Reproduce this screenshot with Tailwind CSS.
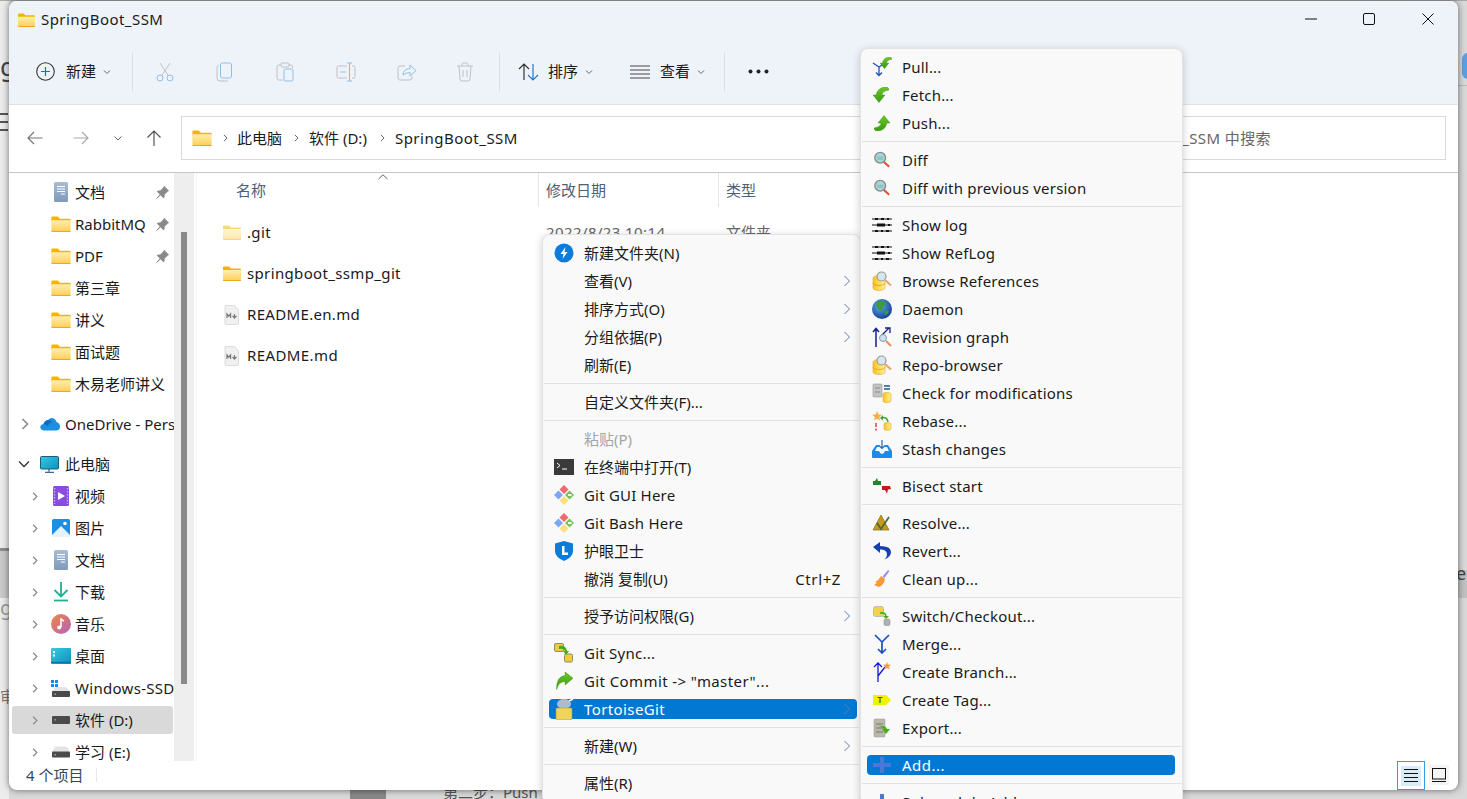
<!DOCTYPE html>
<html lang="zh-CN">
<head>
<meta charset="utf-8">
<title>SpringBoot_SSM</title>
<script src="https://cdn.jsdelivr.net/npm/@tailwindcss/browser@4"></script>
</head>
<body class="font-['Noto_Sans','Noto_Sans_CJK_SC',sans-serif] text-[15px] text-[#1a1a1a]">
<svg class="absolute w-0 h-0" aria-hidden="true">
  <defs>
    <linearGradient id="gf" x1="0" y1="0" x2="0" y2="1"><stop offset="0" stop-color="#ffeeb0"/><stop offset="1" stop-color="#fccf55"/></linearGradient>
    <linearGradient id="gdoc" x1="0" y1="0" x2="0" y2="1"><stop offset="0" stop-color="#a9bcd6"/><stop offset="1" stop-color="#7f9ab8"/></linearGradient>
    <linearGradient id="gmon" x1="0" y1="0" x2="1" y2="1"><stop offset="0" stop-color="#35cbe0"/><stop offset="1" stop-color="#0f8fc0"/></linearGradient>
    <linearGradient id="gmus" x1="0" y1="0" x2="1" y2="1"><stop offset="0" stop-color="#f08a3c"/><stop offset="1" stop-color="#b060c0"/></linearGradient>
    <linearGradient id="gcoin" x1="0" y1="0" x2="1" y2="0"><stop offset="0" stop-color="#f7c420"/><stop offset="1" stop-color="#fff09a"/></linearGradient>
    <linearGradient id="ggreen" x1="0" y1="0" x2="0" y2="1"><stop offset="0" stop-color="#6cc82c"/><stop offset="1" stop-color="#3a9a10"/></linearGradient>
    <radialGradient id="gglobe" cx=".4" cy=".35" r=".7"><stop offset="0" stop-color="#5ab0f0"/><stop offset="1" stop-color="#123a90"/></radialGradient>
    <symbol id="folder" viewBox="0 0 18 15"><path d="M0 1.500A1 1 0 0 1 1 .5h5l2 2h9a1 1 0 0 1 1 1V6H0z" fill="#f5b400"/><path d="M0 4h18v10a.8.8 0 0 1-.8.8H.8A.8.8 0 0 1 0 14z" fill="url(#gf)"/><path d="M0 14h18v.2a.7.7 0 0 1-.7.7H.7a.7.7 0 0 1-.7-.7z" fill="#e9a91c"/></symbol>
    <symbol id="doc" viewBox="0 0 16 20"><rect x="1" y="0" width="14" height="20" rx="1.500" fill="url(#gdoc)"/><path d="M4 4.500h8M4 7h8M4 9.500h8M8 12h4" stroke="#fff" stroke-width="1.100"/></symbol>
    <symbol id="pin" viewBox="0 0 14 14"><path d="M8.500.8l4.700 4.700-1.300.6-3 3 .1 2.200-1.100 1-2.700-2.700L1.500 13l-.5-.5 3.400-3.700L1.700 6.100l1-1 2.200.1 3-3z" fill="#8a8a8a"/></symbol>
    <symbol id="chev" viewBox="0 0 8 12"><path d="M1.500 1L6.500 6l-5 5" fill="none" stroke="#8a8a8a" stroke-width="1.600"/></symbol>
    <symbol id="subm" viewBox="0 0 8 12"><path d="M1.500 1l5 5-5 5" fill="none" stroke="#5b7fb0" stroke-width="1"/></symbol>
    <symbol id="drive" viewBox="0 0 18 12"><path d="M2.500 1.500Q3 .5 4 .5h10q1 0 1.500 1L18 6H0z" fill="#e4e4e4"/><rect x="0" y="5.500" width="18" height="6" rx="1" fill="#4a4a4a"/><rect x="2.500" y="8" width="1.500" height="1.500" fill="#4fd46c"/></symbol>
    <symbol id="gitd" viewBox="0 0 20 20"><path d="M10 0l4.500 4.500-4.500 4.500-4.500-4.500z" fill="#ef6a6f"/><path d="M15.500 5.500L20 10l-4.500 4.500L11 10z" fill="#78c257"/><path d="M10 11l4.500 4.500L10 20l-4.500-4.500z" fill="#fbdf7c"/><path d="M4.500 5.500L9 10l-4.500 4.500L0 10z" fill="#7aa8f4"/><path d="M14 9h3.500v2H14z" fill="#fff"/></symbol>
    <symbol id="lens" viewBox="0 0 20 20"><path d="M11 11l7 6.500" stroke="#ef4a2a" stroke-width="2.300"/><circle cx="8" cy="7.500" r="6" fill="#a8d6d8" stroke="#8a8a8a" stroke-width="1.500"/><path d="M4.500 7h7M4.500 9h7" stroke="#7fb0b2"/></symbol>
    <symbol id="slog" viewBox="0 0 20 16"><path d="M0 2h20M0 8h20M0 14h20" stroke="#111" stroke-width="1.100"/><path d="M3 1h3v2H3zM9 1h3v2H9zM15 1h2v2h-2zM5 6.500h8v3H5zM16 7h2v2h-2zM3 13h3v2H3zM9 13h2v2H9zM14 13h3v2h-3z" fill="#111"/></symbol>
    <symbol id="coinlens" viewBox="0 0 20 20"><path d="M1 7a6 2.500 0 0 1 12 0v10a6 2.500 0 0 1-12 0z" fill="url(#gcoin)" stroke="#e0a820" stroke-width=".6"/><path d="M1 12a6 2.500 0 0 0 12 0" fill="none" stroke="#d99f1a" stroke-width=".8"/><circle cx="9.500" cy="5.500" r="4.500" fill="#d6e6ee" stroke="#9a9a9a" stroke-width="1.200"/><path d="M13 9l6 5.500" stroke="#e8a468" stroke-width="2"/></symbol>
    <symbol id="gfetch" viewBox="0 0 16 16"><path d="M0 8l6 7.500L12 8H9q0-4 7-5-.5-3-3-3Q5 0 3 8z" fill="url(#ggreen)" stroke="#2e8a0d" stroke-width=".4"/></symbol>
    <symbol id="gpush" viewBox="0 0 16 16"><path d="M16 8L10 .5 4 8h3q0 4-7 5 .5 3 3 3 8 0 10-8z" fill="url(#ggreen)" stroke="#2e8a0d" stroke-width=".4"/></symbol>
    <symbol id="gcommit" viewBox="0 0 16 16"><path d="M16 5.500L9 0v3Q1 4 1.500 15.500 3 8.500 9 8.500V11.500z" fill="url(#ggreen)" stroke="#2e8a0d" stroke-width=".4"/></symbol>
  </defs>
</svg>

<div class="relative w-[1467px] h-[799px] overflow-hidden bg-[#d9d9d9]">
  <!-- desktop behind the window -->
  <div class="absolute left-0 top-0 w-[9px] h-[799px] bg-[#ececec]"></div>
  <div class="absolute left-0 top-0 w-[1467px] h-px bg-[#aaa]"></div>
  <div class="absolute left-0 top-[548px] w-[9px] h-[3px] bg-[#8c8c8c]"></div>
  <div class="absolute left-0 top-[551px] w-[9px] h-[47px] bg-[#c9c9c9]"></div>
  <div class="absolute left-0 top-[52px] text-[26px] leading-[28px] text-[#444]">g</div>
  <div class="absolute left-0 top-[596px] text-[20px] leading-[24px] text-[#999]">g</div>
  <div class="absolute left-0 top-[113px] w-[8px] h-[2px] bg-[#555]"></div>
  <div class="absolute left-0 top-[121px] w-[8px] h-[2px] bg-[#555]"></div>
  <div class="absolute left-0 top-[129px] w-[8px] h-[2px] bg-[#555]"></div>
  <div class="absolute left-0 top-[686px] text-[15px] leading-[20px] text-[#777]">审</div>
  <div class="absolute left-[1458px] top-[85px] w-[9px] h-[1px] bg-[#bbb]"></div>
  <div class="absolute left-[1462px] top-[53px] w-[12px] h-[26px] rounded-full bg-[#5c9fe0]"></div>
  <div class="absolute left-[1458px] top-[570px] w-[9px] h-[28px] bg-[#c2c2c2]"></div>
  <div class="absolute left-[1456px] top-[561px] text-[18px] leading-[24px] text-[#444]">e</div>
  <div class="absolute left-[350px] top-[790px] w-[36px] h-[9px] bg-[#888]"></div>
  <div class="absolute left-[443px] top-[782px] text-[15px] leading-[20px] text-[#555]">第二步：Push</div>

  <!-- explorer window -->
  <div class="absolute left-[9px] top-[1px] w-[1449px] h-[789px] rounded-lg overflow-hidden bg-white flex flex-col shadow-[0_0_7px_rgba(0,0,0,0.55)]">
    <!-- title + toolbar -->
    <div class="h-[104px] bg-[#eef3fa] border-b border-[#dfe2e6] shrink-0 flex flex-col">
      <div class="h-[38px] flex items-center">
        <svg class="ml-[9px] mb-[1px] w-[17px] h-[14px]"><use href="#folder"/></svg>
        <span class="ml-[6px] mb-[1px] tracking-[0.45px] leading-none">SpringBoot_SSM</span>
        <svg class="ml-auto mr-[46px] mb-[2px] w-[12px] h-[12px]" viewBox="0 0 12 12"><path d="M0 6h12" stroke="#111" stroke-width="1"/></svg>
        <svg class="mr-[47px] mb-[2px] w-[12px] h-[12px]" viewBox="0 0 12 12"><rect x=".5" y=".5" width="11" height="11" rx="1.500" fill="none" stroke="#111"/></svg>
        <svg class="mr-[24px] mb-[2px] w-[12px] h-[12px]" viewBox="0 0 12 12"><path d="M.5.5l11 11M11.500.5l-11 11" stroke="#111" stroke-width="1"/></svg>
      </div>
      <div class="flex items-center h-[65px]">
        <svg class="ml-[27px] w-[19px] h-[19px]" viewBox="0 0 19 19"><circle cx="9.500" cy="9.500" r="8.800" fill="none" stroke="#333" stroke-width="1.100"/><path d="M9.500 5v9M5 9.500h9" stroke="#1b6fc2" stroke-width="1.200"/></svg>
        <span class="ml-[11px]">新建</span>
        <svg class="ml-[7px] w-[8px] h-[8px]" viewBox="0 0 8 8"><path d="M1 2.500l3 3 3-3" fill="none" stroke="#666"/></svg>
        <div class="ml-[21px] w-px h-[40px] bg-[#dde1e6]"></div>
        <div class="flex items-center opacity-45">
          <svg class="ml-[23px] w-[18px] h-[20px]" viewBox="0 0 18 20"><path d="M4 1l8.500 13M14 1L5.500 14" stroke="#888" stroke-width="1"/><circle cx="4" cy="16" r="3" fill="none" stroke="#1e82d2"/><circle cx="14" cy="16" r="3" fill="none" stroke="#1e82d2"/></svg>
          <svg class="ml-[42px] w-[18px] h-[20px]" viewBox="0 0 18 20"><path d="M3 3Q1 3.500 1 6v10q0 3 3 3h8" fill="none" stroke="#888"/><rect x="4.500" y="1" width="11" height="15" rx="2" fill="none" stroke="#1e82d2"/></svg>
          <svg class="ml-[42px] w-[18px] h-[20px]" viewBox="0 0 18 20"><path d="M5 3H2.500Q1 3 1 5v11q0 2 2 2h4M13 3h2q1.500 0 1.500 2v1" fill="none" stroke="#888"/><rect x="5" y="1" width="8" height="4" rx="1" fill="none" stroke="#888"/><rect x="8" y="7" width="9" height="12" rx="1.500" fill="none" stroke="#1e82d2"/></svg>
          <svg class="ml-[42px] w-[20px] h-[20px]" viewBox="0 0 20 20"><path d="M11 4H2.500Q1 4 1 5.500v9Q1 16 2.500 16H11M16 4h2q1 0 1 1.500v9q0 1.500-1 1.500h-2" fill="none" stroke="#888"/><path d="M4 10h6M13.500 1v18M11 1h5M11 19h5" stroke="#1e82d2"/></svg>
          <svg class="ml-[41px] w-[20px] h-[20px]" viewBox="0 0 20 20"><path d="M8 4H3Q1 4 1 6v10q0 2 2 2h10q2 0 2-2v-2" fill="none" stroke="#888"/><path d="M6 13q0-6 7-6.500V3l6 5.500-6 5.500v-3.500q-4 0-7 2.500z" fill="none" stroke="#1e82d2"/></svg>
          <svg class="ml-[39px] w-[18px] h-[20px]" viewBox="0 0 18 20"><path d="M1 4h16M6 4V2.500Q6 1 7.500 1h3Q12 1 12 2.500V4M3 4l1 13q0 2 2 2h6q2 0 2-2l1-13M7 8v7M11 8v7" fill="none" stroke="#888"/></svg>
        </div>
        <div class="ml-[25px] w-px h-[40px] bg-[#dde1e6]"></div>
        <svg class="ml-[18px] w-[21px] h-[18px]" viewBox="0 0 21 18"><path d="M6 17V1M1 6l5-5 5 5" fill="none" stroke="#333" stroke-width="1.200"/><path d="M15 1v16M10 12l5 5 5-5" fill="none" stroke="#1b78cf" stroke-width="1.200"/></svg>
        <span class="ml-[9px]">排序</span>
        <svg class="ml-[7px] w-[8px] h-[8px]" viewBox="0 0 8 8"><path d="M1 2.500l3 3 3-3" fill="none" stroke="#666"/></svg>
        <svg class="ml-[37px] w-[20px] h-[14px]" viewBox="0 0 20 14"><path d="M0 1h20M0 5h20M0 9h20M0 13h20" stroke="#444" stroke-width="1"/></svg>
        <span class="ml-[10px]">查看</span>
        <svg class="ml-[7px] w-[8px] h-[8px]" viewBox="0 0 8 8"><path d="M1 2.500l3 3 3-3" fill="none" stroke="#666"/></svg>
        <div class="ml-[19px] w-px h-[40px] bg-[#dde1e6]"></div>
        <svg class="ml-[23px] w-[21px] h-[5px]" viewBox="0 0 21 5"><circle cx="2.500" cy="2.500" r="2" fill="#222"/><circle cx="10.500" cy="2.500" r="2" fill="#222"/><circle cx="18.500" cy="2.500" r="2" fill="#222"/></svg>
      </div>
    </div>
    <!-- address bar -->
    <div class="h-[68px] shrink-0 bg-white border-b border-[#c6c6c6] pt-[11px] flex items-start">
      <div class="flex items-center h-[44px]">
        <svg class="ml-[18px] w-[16px] h-[14px]" viewBox="0 0 16 14"><path d="M15.500 7H1M7 1L1 7l6 6" fill="none" stroke="#777" stroke-width="1.200"/></svg>
        <svg class="ml-[30px] w-[16px] h-[14px]" viewBox="0 0 16 14"><path d="M.5 7H15M9 1l6 6-6 6" fill="none" stroke="#aaa" stroke-width="1.200"/></svg>
        <svg class="ml-[25px] w-[8px] h-[8px]" viewBox="0 0 8 8"><path d="M.5 2.500L4 6l3.500-3.500" fill="none" stroke="#666"/></svg>
        <svg class="ml-[24px] w-[16px] h-[16px]" viewBox="0 0 16 16"><path d="M8 16V1M1.500 7.500L8 1l6.500 6.500" fill="none" stroke="#555" stroke-width="1.200"/></svg>
      </div>
      <div class="ml-[19px] w-[815px] h-[44px] border border-[#dadada] flex items-center">
        <svg class="ml-[10px] w-[20px] h-[16px]"><use href="#folder"/></svg>
        <svg class="ml-[11px] w-[5px] h-[8px]" viewBox="0 0 8 12"><path d="M1.500 1l5 5-5 5" fill="none" stroke="#555" stroke-width="1.500"/></svg>
        <span class="ml-[9px]">此电脑</span>
        <svg class="ml-[12px] w-[5px] h-[8px]" viewBox="0 0 8 12"><path d="M1.500 1l5 5-5 5" fill="none" stroke="#555" stroke-width="1.500"/></svg>
        <span class="ml-[10px]">软件 (D:)</span>
        <svg class="ml-[13px] w-[5px] h-[8px]" viewBox="0 0 8 12"><path d="M1.500 1l5 5-5 5" fill="none" stroke="#555" stroke-width="1.500"/></svg>
        <span class="ml-[10px] tracking-[0.5px]">SpringBoot_SSM</span>
      </div>
      <div class="flex-1 mr-[12px] h-[44px] border border-[#dadada] border-l-0 flex items-center justify-end pr-[174px] text-[#666] whitespace-nowrap tracking-[0.4px]">在 SpringBoot_SSM 中搜索</div>
    </div>
    <!-- nav + files -->
    <div class="flex-1 min-h-0 flex">
      <div class="w-[165px] shrink-0 overflow-hidden pt-[3px] pl-[3px] whitespace-nowrap">
        <div class="flex items-center h-8 pl-[39px]"><svg class="w-[20px] h-[20px]"><use href="#doc"/></svg><span class="ml-[4px] flex-1">文档</span><svg class="w-[15px] h-[15px] mr-[4px]"><use href="#pin"/></svg></div>
        <div class="flex items-center h-8 pl-[39px]"><svg class="w-[20px] h-[16px]"><use href="#folder"/></svg><span class="ml-[4px] flex-1">RabbitMQ</span><svg class="w-[15px] h-[15px] mr-[4px]"><use href="#pin"/></svg></div>
        <div class="flex items-center h-8 pl-[39px]"><svg class="w-[20px] h-[16px]"><use href="#folder"/></svg><span class="ml-[4px] flex-1">PDF</span><svg class="w-[15px] h-[15px] mr-[4px]"><use href="#pin"/></svg></div>
        <div class="flex items-center h-8 pl-[39px]"><svg class="w-[20px] h-[16px]"><use href="#folder"/></svg><span class="ml-[4px]">第三章</span></div>
        <div class="flex items-center h-8 pl-[39px]"><svg class="w-[20px] h-[16px]"><use href="#folder"/></svg><span class="ml-[4px]">讲义</span></div>
        <div class="flex items-center h-8 pl-[39px]"><svg class="w-[20px] h-[16px]"><use href="#folder"/></svg><span class="ml-[4px]">面试题</span></div>
        <div class="flex items-center h-8 pl-[39px]"><svg class="w-[20px] h-[16px]"><use href="#folder"/></svg><span class="ml-[4px]">木易老师讲义</span></div>
        <div class="flex items-center h-8 mt-2 pl-[9px] overflow-hidden">
          <svg class="w-[8px] h-[12px] mr-[11px] shrink-0"><use href="#chev"/></svg>
          <svg class="w-[20px] h-[14px] shrink-0" viewBox="0 0 20 14"><path d="M4 13.500Q0 13 .3 9.500 1 7 3.500 7 4.500 3.500 8 3q2.500-3 6-1.500 2 1 2.500 3.500 3.500 1 3.500 4.500 0 3.500-3 4z" fill="#1c8fe0"/><path d="M3.500 7Q5 3.500 8 3q3 0 4.500 2.500Q9 5 8 9z" fill="#0e6cc0"/></svg>
          <span class="ml-[5px]">OneDrive - Personal</span>
        </div>
        <div class="flex items-center h-8 mt-2 pl-[6px]">
          <svg class="w-[12px] h-[8px] mr-[10px] shrink-0" viewBox="0 0 12 8"><path d="M1 1.500l5 5 5-5" fill="none" stroke="#333" stroke-width="1.300"/></svg>
          <svg class="w-[19px] h-[17px] shrink-0" viewBox="0 0 19 17"><rect x=".5" y=".5" width="18" height="12.500" rx="1" fill="url(#gmon)" stroke="#17607a"/><path d="M9 13v2.500M5 16.500h9" stroke="#4a6a80" stroke-width="1.500"/></svg>
          <span class="ml-[6px]">此电脑</span>
        </div>
        <div class="flex items-center h-8 pl-[20px]"><svg class="w-[6px] h-[11px] mr-[13px] shrink-0"><use href="#chev"/></svg><svg class="w-[20px] h-[20px] shrink-0" viewBox="0 0 20 20"><rect x="2" y="0" width="16" height="20" rx="1.500" fill="#8a4be0"/><path d="M7 6l7 4-7 4z" fill="#fff"/><path d="M3.500 2v16M16.500 2v16" stroke="#c6a5f5" stroke-width="1.500" stroke-dasharray="1.500 1.500"/></svg><span class="ml-[4px]">视频</span></div>
        <div class="flex items-center h-8 pl-[20px]"><svg class="w-[6px] h-[11px] mr-[13px] shrink-0"><use href="#chev"/></svg><svg class="w-[18px] h-[18px] ml-px shrink-0" viewBox="0 0 18 18"><rect width="18" height="18" rx="1.500" fill="#1a8fe3"/><path d="M0 16L9 7l9 9v2H0z" fill="#e6f3fd"/><circle cx="13" cy="4.500" r="1.800" fill="#fff"/></svg><span class="ml-[5px]">图片</span></div>
        <div class="flex items-center h-8 pl-[20px]"><svg class="w-[6px] h-[11px] mr-[13px] shrink-0"><use href="#chev"/></svg><svg class="w-[20px] h-[20px] shrink-0"><use href="#doc"/></svg><span class="ml-[4px]">文档</span></div>
        <div class="flex items-center h-8 pl-[20px]"><svg class="w-[6px] h-[11px] mr-[13px] shrink-0"><use href="#chev"/></svg><svg class="w-[20px] h-[20px] shrink-0" viewBox="0 0 20 20"><path d="M10 0v14M3.500 8l6.500 6.500L16.500 8" fill="none" stroke="#1ab394" stroke-width="1.800"/><path d="M3 18.500h14" stroke="#1ab394" stroke-width="1.800"/></svg><span class="ml-[4px]">下载</span></div>
        <div class="flex items-center h-8 pl-[20px]"><svg class="w-[6px] h-[11px] mr-[13px] shrink-0"><use href="#chev"/></svg><svg class="w-[20px] h-[20px] shrink-0" viewBox="0 0 20 20"><circle cx="10" cy="10" r="10" fill="url(#gmus)"/><path d="M10 4.500v8.500" stroke="#fff" stroke-width="1.500"/><path d="M10 4.500q1 2 3 2.500" fill="none" stroke="#fff" stroke-width="1.500"/><circle cx="8.200" cy="13.500" r="2" fill="#fff"/></svg><span class="ml-[4px]">音乐</span></div>
        <div class="flex items-center h-8 pl-[20px]"><svg class="w-[6px] h-[11px] mr-[13px] shrink-0"><use href="#chev"/></svg><svg class="w-[20px] h-[16px] shrink-0" viewBox="0 0 20 16"><rect width="20" height="16" rx="1" fill="url(#gmon)"/><path d="M0 14.500h20" stroke="#0b6fa8" stroke-width="1.500"/><path d="M2 3h2v2H2zM2 6.500h2v2H2z" fill="#fff"/></svg><span class="ml-[4px]">桌面</span></div>
        <div class="flex items-center h-8 pl-[20px] overflow-hidden"><svg class="w-[6px] h-[11px] mr-[13px] shrink-0"><use href="#chev"/></svg><svg class="w-[20px] h-[17px] shrink-0" viewBox="0 0 20 17"><path d="M0 0h3v3H0zM4 0h3v3H4zM0 4h3v3H0zM4 4h3v3H4z" fill="#0f8ce0"/><path d="M3 9Q3.500 7.500 5 7h9q1.500 0 2.500 1.500L19 12H1z" fill="#e4e4e4"/><rect x="1" y="11" width="18" height="6" rx="1" fill="#4a4a4a"/><rect x="3.500" y="13.500" width="1.500" height="1.500" fill="#4fd46c"/></svg><span class="ml-[4px] tracking-[0.3px]">Windows-SSD (C:)</span></div>
        <div class="flex items-center h-[28px] my-[2px] mr-px pl-[20px] bg-[#d9d9d9] rounded-[3px]"><svg class="w-[6px] h-[11px] mr-[13px] shrink-0"><use href="#chev"/></svg><svg class="w-[18px] h-[8px] ml-px shrink-0" viewBox="0 0 18 8"><rect width="18" height="8" rx="1" fill="#4a4a4a"/><rect x="2.500" y="3" width="1.500" height="1.500" fill="#4fd46c"/></svg><span class="ml-[5px]">软件 (D:)</span></div>
        <div class="flex items-center h-8 pl-[20px]"><svg class="w-[6px] h-[11px] mr-[13px] shrink-0"><use href="#chev"/></svg><svg class="w-[18px] h-[12px] ml-px shrink-0"><use href="#drive"/></svg><span class="ml-[5px]">学习 (E:)</span></div>
      </div>
      <div class="w-[20px] shrink-0 bg-[#eeeeee] pt-[59px]"><div class="mx-auto w-[6px] h-[452px] bg-[#8a8a8a]"></div></div>
      <div class="flex-1 min-w-0 ml-[2px] border-l border-[#f2f2f2] relative">
        <svg class="absolute left-[181px] top-[1px] w-[10px] h-[6px]" viewBox="0 0 10 6"><path d="M.5 5L5 .8 9.500 5" fill="none" stroke="#666"/></svg>
        <div class="flex h-[39px] text-[#4c607a]">
          <div class="w-[341px] h-[34px] pl-[39px] flex items-center">名称</div>
          <div class="w-[180px] h-[34px] border-l border-[#e5e5e5] pl-[7px] flex items-center">修改日期</div>
          <div class="w-[180px] h-[34px] border-l border-[#e5e5e5] pl-[7px] flex items-center">类型</div>
        </div>
        <div class="flex items-center h-[41px] pl-[26px]"><svg class="w-[18px] h-[15px] opacity-50"><use href="#folder"/></svg><span class="ml-[6px] w-[299px] tracking-[0.35px]">.git</span><span class="w-[180px] text-[#666] tracking-[0.4px]">2022/8/23 10:14</span><span class="text-[#666]">文件夹</span></div>
        <div class="flex items-center h-[41px] pl-[26px]"><svg class="w-[18px] h-[15px]"><use href="#folder"/></svg><span class="ml-[6px] tracking-[0.35px]">springboot_ssmp_git</span></div>
        <div class="flex items-center h-[41px] pl-[26px]"><svg class="w-[18px] h-[20px]" viewBox="0 0 18 20"><path d="M2.500 0.500h9l4 4.500v13a1.500 1.500 0 0 1-1.500 1.500H3.500A1.500 1.500 0 0 1 2 18V1z" fill="#f0f0f0" stroke="#dcdcdc"/><path d="M4 13V9l1.800 2.200L7.600 9v4M11.500 9v3.500M9.500 10.800l2 2.200 2-2.200" fill="none" stroke="#777" stroke-width="1.200"/></svg><span class="ml-[6px] tracking-[0.33px]">README.en.md</span></div>
        <div class="flex items-center h-[41px] pl-[26px]"><svg class="w-[18px] h-[20px]" viewBox="0 0 18 20"><path d="M2.500 0.500h9l4 4.500v13a1.500 1.500 0 0 1-1.500 1.500H3.500A1.500 1.500 0 0 1 2 18V1z" fill="#f0f0f0" stroke="#dcdcdc"/><path d="M4 13V9l1.800 2.200L7.600 9v4M11.500 9v3.500M9.500 10.800l2 2.200 2-2.200" fill="none" stroke="#777" stroke-width="1.200"/></svg><span class="ml-[6px] tracking-[0.4px]">README.md</span></div>
      </div>
    </div>
    <!-- status bar -->
    <div class="h-[29px] shrink-0 flex items-start pl-[17px]">
      <span class="h-[28px] flex items-center text-[#33475f]">4 个项目</span>
      <div class="ml-[13px] mt-[7px] w-px h-[14px] bg-[#e8e8e8]"></div>
      <div class="ml-auto w-[28px] h-[29px] border border-[#2ea0e0] flex items-center justify-center">
        <div class="w-[20px] h-[20px] bg-[#d9ebf6] flex items-center justify-center"><svg class="w-[14px] h-[13px]" viewBox="0 0 14 13"><path d="M0 .5h14M0 4.500h14M0 8.500h14M0 12.500h14" stroke="#111"/></svg></div>
      </div>
      <div class="ml-[4px] mr-[9px] mt-[4px] w-[20px] h-[20px] bg-[#f4f4f4] rounded-[2px] flex items-center justify-center"><svg class="w-[14px] h-[14px]" viewBox="0 0 14 14"><rect x=".5" y=".5" width="13" height="10.500" fill="none" stroke="#111"/><path d="M0 13.500h14" stroke="#111"/></svg></div>
    </div>
  </div>

  <!-- first context menu -->
  <div class="absolute left-[542px] top-[234px] w-[319px] h-[570px] rounded-lg bg-[#f9f9f9] border border-[#e3e3e3] py-[4px] shadow-[0_2px_8px_rgba(0,0,0,0.2)] whitespace-nowrap">
    <div class="h-[28px] flex items-center px-[11px]"><svg class="w-[20px] h-[20px] mr-[10px]" viewBox="0 0 20 20"><circle cx="10" cy="10" r="9.500" fill="#0c7cd8"/><path d="M11.500 4L6.500 11h3l-1 5 5-7h-3z" fill="#fff"/></svg>新建文件夹(N)</div>
    <div class="h-[28px] flex items-center pl-[41px] pr-[9px]"><span>查看(V)</span><svg class="ml-auto w-[8px] h-[12px]"><use href="#subm"/></svg></div>
    <div class="h-[28px] flex items-center pl-[41px] pr-[9px]"><span>排序方式(O)</span><svg class="ml-auto w-[8px] h-[12px]"><use href="#subm"/></svg></div>
    <div class="h-[28px] flex items-center pl-[41px] pr-[9px]"><span>分组依据(P)</span><svg class="ml-auto w-[8px] h-[12px]"><use href="#subm"/></svg></div>
    <div class="h-[28px] flex items-center pl-[41px]">刷新(E)</div>
    <div class="h-px my-[4px] mx-px bg-[#e2e2e2]"></div>
    <div class="h-[28px] flex items-center pl-[41px]">自定义文件夹(F)...</div>
    <div class="h-px my-[4px] mx-px bg-[#e2e2e2]"></div>
    <div class="h-[28px] flex items-center pl-[41px] text-[#a5a5a5]">粘贴(P)</div>
    <div class="h-[28px] flex items-center px-[11px]"><svg class="w-[20px] h-[16px] mr-[10px]" viewBox="0 0 20 16"><rect width="20" height="16" fill="#3a3a3a"/><path d="M3 4l3 2.500L3 9" fill="none" stroke="#fff"/><path d="M8 10h5" stroke="#fff"/></svg>在终端中打开(T)</div>
    <div class="h-[28px] flex items-center px-[11px]"><svg class="w-[20px] h-[20px] mr-[10px]"><use href="#gitd"/></svg><span class="tracking-[0.2px]">Git GUI Here</span></div>
    <div class="h-[28px] flex items-center px-[11px]"><svg class="w-[20px] h-[20px] mr-[10px]"><use href="#gitd"/></svg><span class="tracking-[0.2px]">Git Bash Here</span></div>
    <div class="h-[28px] flex items-center px-[11px]"><svg class="w-[18px] h-[20px] ml-px mr-[11px]" viewBox="0 0 18 20"><path d="M9 0l9 2.500V10q0 6-9 10Q0 16 0 10V2.500z" fill="#0c7cd8"/><path d="M7 5v9h6v-2.500H9.500V5z" fill="#fff"/></svg>护眼卫士</div>
    <div class="h-[28px] flex items-center pl-[41px] pr-[19px]"><span>撤消 复制(U)</span><span class="ml-auto tracking-[0.6px]">Ctrl+Z</span></div>
    <div class="h-px my-[4px] mx-px bg-[#e2e2e2]"></div>
    <div class="h-[28px] flex items-center pl-[41px] pr-[9px]"><span>授予访问权限(G)</span><svg class="ml-auto w-[8px] h-[12px]"><use href="#subm"/></svg></div>
    <div class="h-px my-[4px] mx-px bg-[#e2e2e2]"></div>
    <div class="h-[28px] flex items-center px-[11px]"><svg class="w-[20px] h-[20px] mr-[10px]" viewBox="0 0 20 20"><rect x="0.500" y="0.500" width="9" height="8" rx="1.500" fill="#f3cb3a" stroke="#8d8d70"/><rect x="10.500" y="11" width="8" height="8" rx="1.500" fill="#f3cb3a" stroke="#8d8d70"/><path d="M5 3q7-1 8 5h2l-3 4-3-4h2Q10 5 5 6z" fill="#44ad17"/></svg><span class="tracking-[0.25px]">Git Sync...</span></div>
    <div class="h-[28px] flex items-center px-[11px]"><svg class="w-[18px] h-[18px] ml-px mr-[11px]"><use href="#gcommit"/></svg><span class="tracking-[0.4px]">Git Commit -&gt; "master"...</span></div>
    <div class="h-[28px] flex items-center"><div class="flex-1 ml-[6px] mr-[3px] h-[20px] rounded-[4px] bg-[#0078d4] text-white flex items-center pl-[5px] pr-[6px]"><svg class="w-[20px] h-[22px] mr-[10px] shrink-0" viewBox="0 0 20 22"><ellipse cx="10" cy="6" rx="7" ry="5" fill="#a8bcd8"/><path d="M15 3l4-2" stroke="#fff" stroke-width="1.500"/><path d="M3 10h14q1 0 1 1v10q0 1-1 1H3q-1 0-1-1V11q0-1 1-1z" fill="#f0d35a" stroke="#b09a30" stroke-width=".6"/></svg><span class="tracking-[0.4px]">TortoiseGit</span><svg class="ml-auto w-[8px] h-[12px]"><use href="#subm"/></svg></div></div>
    <div class="h-px my-[4px] mx-px bg-[#e2e2e2]"></div>
    <div class="h-[28px] flex items-center pl-[41px] pr-[9px]"><span>新建(W)</span><svg class="ml-auto w-[8px] h-[12px]"><use href="#subm"/></svg></div>
    <div class="h-px my-[4px] mx-px bg-[#e2e2e2]"></div>
    <div class="h-[28px] flex items-center pl-[41px]">属性(R)</div>
  </div>

  <!-- TortoiseGit submenu -->
  <div class="absolute left-[860px] top-[48px] w-[323px] h-[770px] rounded-lg bg-[#f9f9f9] border border-[#e3e3e3] py-[4px] shadow-[0_2px_8px_rgba(0,0,0,0.2)] whitespace-nowrap tracking-[0.2px]">
    <div class="h-[28px] flex items-center px-[11px]"><svg class="w-[20px] h-[20px] mr-[10px]" viewBox="0 0 20 20"><path d="M1 6l6 4v8M13 6l-6 4M4 15.500L7 18.500l3-3" fill="none" stroke="#1b4fc4" stroke-width="1.300"/><use href="#gfetch" x="8" y="0" width="12" height="12"/></svg>Pull...</div>
    <div class="h-[28px] flex items-center px-[11px]"><svg class="w-[16px] h-[16px] ml-[1px] mr-[13px]"><use href="#gfetch"/></svg>Fetch...</div>
    <div class="h-[28px] flex items-center px-[11px]"><svg class="w-[16px] h-[16px] ml-[2px] mr-[12px]"><use href="#gpush"/></svg>Push...</div>
    <div class="h-px my-[4px] mx-px bg-[#e2e2e2]"></div>
    <div class="h-[28px] flex items-center px-[11px]"><svg class="w-[18px] h-[18px] ml-px mr-[11px]"><use href="#lens"/></svg>Diff</div>
    <div class="h-[28px] flex items-center px-[11px]"><svg class="w-[18px] h-[18px] ml-px mr-[11px]"><use href="#lens"/></svg>Diff with previous version</div>
    <div class="h-px my-[4px] mx-px bg-[#e2e2e2]"></div>
    <div class="h-[28px] flex items-center px-[11px]"><svg class="w-[20px] h-[16px] mr-[10px]"><use href="#slog"/></svg>Show log</div>
    <div class="h-[28px] flex items-center px-[11px]"><svg class="w-[20px] h-[16px] mr-[10px]"><use href="#slog"/></svg>Show RefLog</div>
    <div class="h-[28px] flex items-center px-[11px]"><svg class="w-[20px] h-[20px] mr-[10px]"><use href="#coinlens"/></svg>Browse References</div>
    <div class="h-[28px] flex items-center px-[11px]"><svg class="w-[20px] h-[20px] mr-[10px]" viewBox="0 0 20 20"><circle cx="10" cy="10" r="10" fill="url(#gglobe)"/><path d="M6 2q5-1 7 1 1 3-2 4 1 3-2 5-2-2-4-3-2-3 1-7zM13 12q3-1 4 0-1 3-3 4-2-1-1-4z" fill="#3f9a3a"/></svg>Daemon</div>
    <div class="h-[28px] flex items-center px-[11px]"><svg class="w-[20px] h-[20px] mr-[10px]" viewBox="0 0 20 20"><path d="M4 20V2M1 5l3-3.500L7 5" fill="none" stroke="#12208f" stroke-width="1.500"/><path d="M9 9l8-8M13 1h5v5" fill="none" stroke="#12208f" stroke-width="1.300"/><circle cx="11" cy="11" r="3.500" fill="#cfe1ef" stroke="#8a9aa8"/><path d="M14 14l5 5" stroke="#f08a50" stroke-width="1.800"/></svg>Revision graph</div>
    <div class="h-[28px] flex items-center px-[11px]"><svg class="w-[20px] h-[20px] mr-[10px]"><use href="#coinlens"/></svg>Repo-browser</div>
    <div class="h-[28px] flex items-center px-[11px]"><svg class="w-[20px] h-[20px] mr-[10px]" viewBox="0 0 20 20"><rect x="1" y="1" width="9" height="13" rx="1" fill="#c4c4c4" stroke="#999" stroke-width=".6"/><path d="M3 5h5M3 9h5" stroke="#8a8a8a"/><path d="M12 3h6M12 6h6" stroke="#1c5c8c" stroke-width="1.500"/><path d="M11 11a4 1.500 0 0 1 8 0v7a4 1.500 0 0 1-8 0z" fill="url(#gcoin)" stroke="#e0a820" stroke-width=".6"/></svg>Check for modifications</div>
    <div class="h-[28px] flex items-center px-[11px]"><svg class="w-[20px] h-[20px] mr-[10px]" viewBox="0 0 20 20"><path d="M5 0l1.500 3.500 3.500.3-2.700 2.300.9 3.400L5 7.800 2 9.500l.9-3.400L.2 3.800l3.500-.3z" fill="#f4b040"/><path d="M4 12v4M4 17.500v2" stroke="#e81c1c" stroke-width="1.300"/><path d="M9 7q6-2 7 4" fill="none" stroke="#4aa62a" stroke-width="1.600"/><path d="M11 4L8 7l3 2.500z" fill="#4aa62a"/><path d="M12 13a3.500 1.300 0 0 1 7 0v5a3.500 1.300 0 0 1-7 0z" fill="url(#gcoin)" stroke="#e0a820" stroke-width=".6"/></svg>Rebase...</div>
    <div class="h-[28px] flex items-center px-[11px]"><svg class="w-[20px] h-[18px] mr-[10px]" viewBox="0 0 20 18"><path d="M4 5L0 11v6a1 1 0 0 0 1 1h18a1 1 0 0 0 1-1v-6l-4-6h-3v2h2l2 4h-4q-1 3-3 3t-3-3H3l2-4h2V5z" fill="#1e8ae8"/><path d="M10 0v8M7 5.500L10 8.500l3-3" fill="none" stroke="#1e6ab8" stroke-width="1.200"/></svg>Stash changes</div>
    <div class="h-px my-[4px] mx-px bg-[#e2e2e2]"></div>
    <div class="h-[28px] flex items-center px-[11px]"><svg class="w-[20px] h-[16px] mr-[10px]" viewBox="0 0 20 16"><path d="M3 3l2-3 1 3h3v4H1V3z" fill="#1a8a2e"/><path d="M10 8h8l1 3-3 .5-1 4-2-3.500h-3z" fill="#cc1616"/></svg>Bisect start</div>
    <div class="h-px my-[4px] mx-px bg-[#e2e2e2]"></div>
    <div class="h-[28px] flex items-center px-[11px]"><svg class="w-[18px] h-[16px] ml-px mr-[11px]" viewBox="0 0 18 16"><path d="M8 0l8 15H0z" fill="#c99a1a" stroke="#7a6a20" stroke-width=".7"/><path d="M4 8l4 6 8-12" fill="none" stroke="#4a6a3a" stroke-width="1.800"/></svg>Resolve...</div>
    <div class="h-[28px] flex items-center px-[11px]"><svg class="w-[18px] h-[18px] ml-px mr-[11px]" viewBox="0 0 18 18"><path d="M7 0L0 5l7 6V7.500q7 0 7 5 0 3-2.500 5Q18 15 18 10q0-6-11-6z" fill="#1540b0"/></svg>Revert...</div>
    <div class="h-[28px] flex items-center px-[11px]"><svg class="w-[18px] h-[18px] ml-px mr-[11px]" viewBox="0 0 18 18"><path d="M15 0l1.500 1-5 7-2-1.500z" fill="#9a90f0"/><path d="M8 6l4 3q-1 6-6 8l-5-2q2-1 3-3-1 .5-2 0 4-2 6-6z" fill="#f59a3a"/></svg>Clean up...</div>
    <div class="h-px my-[4px] mx-px bg-[#e2e2e2]"></div>
    <div class="h-[28px] flex items-center px-[11px]"><svg class="w-[18px] h-[20px] ml-px mr-[11px]" viewBox="0 0 18 20"><rect x=".5" y=".5" width="10" height="10" rx="2" fill="#f3d050" stroke="#bbb"/><path d="M7 7q6-1 6 4" fill="none" stroke="#44ad17" stroke-width="1.600"/><path d="M10 10l3 3 3-3z" fill="#44ad17"/><rect x="11" y="13" width="6" height="6.500" rx="1.500" fill="#b0b0b0" stroke="#888" stroke-width=".5"/></svg>Switch/Checkout...</div>
    <div class="h-[28px] flex items-center px-[11px]"><svg class="w-[16px] h-[20px] ml-[2px] mr-[12px]" viewBox="0 0 16 20"><path d="M1 1l7 7v10M15 1L8 8M4 15l4 4 4-4" fill="none" stroke="#1b4fc4" stroke-width="1.700"/></svg>Merge...</div>
    <div class="h-[28px] flex items-center px-[11px]"><svg class="w-[18px] h-[20px] ml-px mr-[11px]" viewBox="0 0 18 20"><path d="M5 20V1M1 5l4-4 4 4M5 14L12 5" fill="none" stroke="#1318d8" stroke-width="1.300"/><path d="M14 0l1 2.500 3 .3-2 1.800.6 2.900L14 6l-2.600 1.500.6-2.900-2-1.800 3-.3z" fill="#f4a040"/></svg>Create Branch...</div>
    <div class="h-[28px] flex items-center px-[11px]"><svg class="w-[18px] h-[12px] ml-px mr-[11px]" viewBox="0 0 18 12"><path d="M0 1h13l5 5-5 5H0z" fill="#f5f000"/><path d="M4.500 3.500h5M7 3.500V9" stroke="#0a7a0a" stroke-width="1.200"/></svg>Create Tag...</div>
    <div class="h-[28px] flex items-center px-[11px]"><svg class="w-[18px] h-[20px] ml-px mr-[11px]" viewBox="0 0 18 20"><rect x="1" y="1" width="11" height="18" rx="1" fill="#b8b8a8" stroke="#999" stroke-width=".5"/><path d="M3 6h7M3 10h7M3 14h7" stroke="#7a7a70"/><path d="M6 9q6-3 8 2h3l-4 5-4-5h2q-1-2-5-2z" fill="#44ad17"/></svg>Export...</div>
    <div class="h-px my-[4px] mx-px bg-[#e2e2e2]"></div>
    <div class="h-[28px] flex items-center"><div class="flex-1 ml-[6px] mr-[7px] h-[20px] rounded-[4px] bg-[#0078d4] text-white flex items-center pl-[5px]"><svg class="w-[20px] h-[20px] mr-[10px]" viewBox="0 0 20 20"><path d="M8 2h4v6h7v4h-7v6H8v-6H1V8h7z" fill="#4a78d8"/></svg><span class="tracking-[0.5px]">Add...</span></div></div>
    <div class="h-px my-[4px] mx-px bg-[#e2e2e2]"></div>
    <div class="h-[28px] flex items-center px-[11px]"><svg class="w-[20px] h-[20px] mr-[10px]" viewBox="0 0 20 20"><path d="M8 2h4v6h7v4h-7v6H8v-6H1V8h7z" fill="#4a78d8"/></svg>Submodule Add...</div>
  </div>
</div>
</body>
</html>
